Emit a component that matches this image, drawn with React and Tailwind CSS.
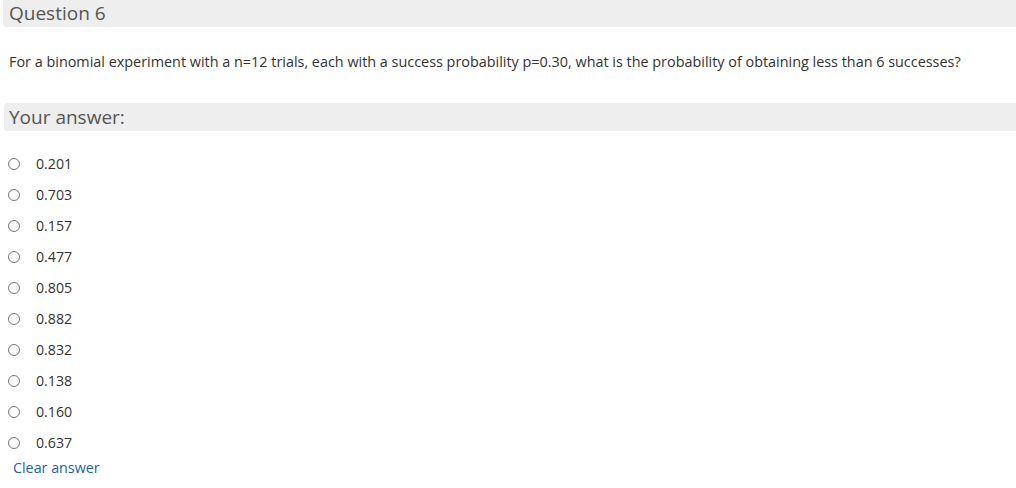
export default function App() {
  const opts = ["0.201","0.703","0.157","0.477","0.805","0.882","0.832","0.138","0.160","0.637"];
  return (
    <div className="w-[1016px] h-[488px] bg-white overflow-hidden text-[#333]" style={{fontFamily: '"Open Sans", sans-serif'}}>
      <div className="ml-[3px] h-[27px] bg-[#eeeeee] rounded-bl-[4px] pl-[6px] flex items-center text-[19px] text-[#555] leading-none">Question 6</div>
      <p className="mt-[25px] ml-[9px] text-[14.4px] leading-[20px] text-[#333]">For a binomial experiment with a n=12 trials, each with a success probability p=0.30, what is the probability of obtaining less than 6 successes?</p>
      <div className="mt-[31px] ml-[4px] h-[28px] bg-[#eeeeee] rounded-l-[4px] pl-[5px] flex items-center text-[19px] text-[#555] leading-none">Your answer:</div>
      <div className="mt-[17px] flex flex-col">
        {opts.map((o) => (
          <div key={o} className="h-[31px] flex items-center pl-[8px]">
            <span className="w-[12px] h-[12px] rounded-full border border-[#777] bg-white"></span>
            <span className="ml-[16px] text-[14.2px] text-[#333]">{o}</span>
          </div>
        ))}
      </div>
      <div className="ml-[13px] -mt-[1px] text-[14.3px] text-[#1f5fa9]">Clear answer</div>
    </div>
  );
}
